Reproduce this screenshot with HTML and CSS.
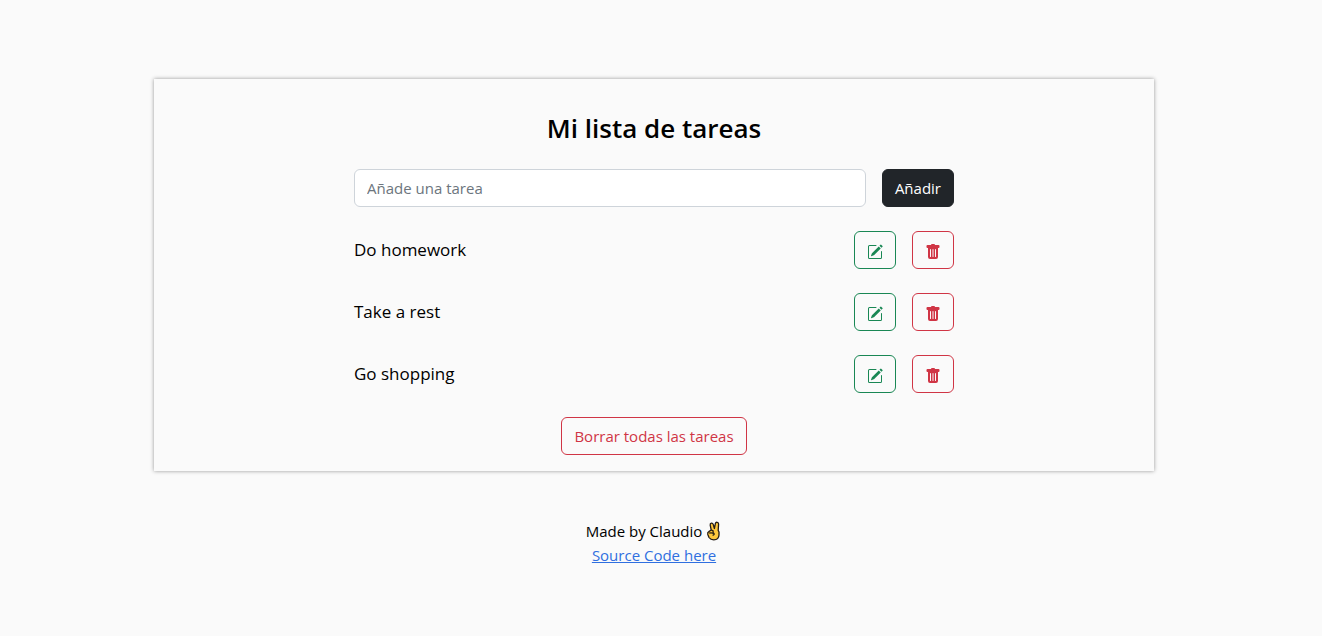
FILE: index.html
```
<!DOCTYPE html>
<html lang="es">
<head>
<meta charset="utf-8">
<meta name="viewport" content="width=device-width, initial-scale=1">
<title>Mi lista de tareas</title>
<link rel="stylesheet" href="styles.css">
</head>
<body>
<svg class="sprite" aria-hidden="true">
  <symbol id="pencil" viewBox="0 0 16 16">
    <path d="M15.502 1.94a.5.5 0 0 1 0 .706L14.459 3.69l-2-2L13.502.646a.5.5 0 0 1 .707 0l1.293 1.293zm-1.75 2.456-2-2L4.939 9.21a.5.5 0 0 0-.121.196l-.805 2.414a.25.25 0 0 0 .316.316l2.414-.805a.5.5 0 0 0 .196-.12l6.813-6.814z"/>
    <path fill-rule="evenodd" d="M1 13.5A1.5 1.5 0 0 0 2.5 15h11a1.5 1.5 0 0 0 1.5-1.5v-6a.5.5 0 0 0-1 0v6a.5.5 0 0 1-.5.5h-11a.5.5 0 0 1-.5-.5v-11a.5.5 0 0 1 .5-.5H9a.5.5 0 0 0 0-1H2.5A1.5 1.5 0 0 0 1 2.5v11z"/>
  </symbol>
  <symbol id="trash" viewBox="0 0 16 16">
    <path d="M2.5 1a1 1 0 0 0-1 1v1a1 1 0 0 0 1 1H3v9a2 2 0 0 0 2 2h6a2 2 0 0 0 2-2V4h.5a1 1 0 0 0 1-1V2a1 1 0 0 0-1-1H10a1 1 0 0 0-1-1H7a1 1 0 0 0-1 1H2.5zm3 4a.5.5 0 0 1 .5.5v7a.5.5 0 0 1-1 0v-7a.5.5 0 0 1 .5-.5zM8 5a.5.5 0 0 1 .5.5v7a.5.5 0 0 1-1 0v-7A.5.5 0 0 1 8 5zm3 .5v7a.5.5 0 0 1-1 0v-7a.5.5 0 0 1 1 0z"/>
  </symbol>
</svg>
<main class="card">
  <h1 class="title">Mi lista de tareas</h1>
  <form class="row">
    <input class="field" type="text" placeholder="Añade una tarea" aria-label="Añade una tarea">
    <button class="btn btn-dark" type="submit">Añadir</button>
  </form>
  <ul class="tasks">
    <li class="row">
      <span class="task">Do homework</span>
      <button class="btn btn-edit" type="button" aria-label="Editar"><svg class="icon"><use href="#pencil"/></svg></button>
      <button class="btn btn-delete" type="button" aria-label="Borrar"><svg class="icon"><use href="#trash"/></svg></button>
    </li>
    <li class="row">
      <span class="task">Take a rest</span>
      <button class="btn btn-edit" type="button" aria-label="Editar"><svg class="icon"><use href="#pencil"/></svg></button>
      <button class="btn btn-delete" type="button" aria-label="Borrar"><svg class="icon"><use href="#trash"/></svg></button>
    </li>
    <li class="row">
      <span class="task">Go shopping</span>
      <button class="btn btn-edit" type="button" aria-label="Editar"><svg class="icon"><use href="#pencil"/></svg></button>
      <button class="btn btn-delete" type="button" aria-label="Borrar"><svg class="icon"><use href="#trash"/></svg></button>
    </li>
  </ul>
  <button class="btn btn-delete" type="button">Borrar todas las tareas</button>
</main>
<footer class="footer">
  <p class="credit">Made by Claudio
    <svg class="hand" viewBox="0 0 16 20" aria-hidden="true">
      <path d="M5.2 9 4.2 4.2Q4 2.4 5.4 2.2T7.2 3.4L8.4 7.5 9.4 2.4Q9.8 1 11.2 1.3T12.6 3L12.2 9.5 13 11V14Q12.8 18.8 7.8 18.8 4.6 18.8 3 16.5L1.8 13.5Q1.2 11.5 2.8 10.6Z"/>
      <path d="M5.2 9.2 7 9.6 7.2 11.8M3.2 12.2Q5 11.4 8 12.4 8.6 14 6.6 14.4"/>
    </svg>
  </p>
  <a class="source" href="#">Source Code here</a>
</footer>
</body>
</html>
```
FILE: styles.css
```
* { box-sizing: border-box; }

body {
  margin: 0;
  padding: 79px 168px 64px 154px;
  background: #fafafa;
  color: #000;
  font: 15px/24px "Segoe UI", "Open Sans", "Noto Sans", sans-serif;
}

.sprite { position: absolute; width: 0; height: 0; }

.card {
  display: flex;
  flex-direction: column;
  align-items: center;
  gap: 24px;
  padding: 32px 16px 16px;
  box-shadow: 0 0 4px rgba(0, 0, 0, 0.4);
}

.title {
  margin: 0;
  font-size: 26px;
  line-height: 34px;
  font-weight: 600;
}

.row {
  display: flex;
  gap: 16px;
  width: 100%;
  max-width: 600px;
}

.field {
  flex: 1;
  min-width: 0;
  height: 38px;
  padding: 6px 12px;
  border: 1px solid #ced4da;
  border-radius: 6px;
  background: #fff;
  color: #212529;
  font: inherit;
}

.field::placeholder { color: #6c757d; opacity: 1; }

.btn {
  min-height: 38px;
  padding: 6px 12px;
  border: 1px solid;
  border-radius: 6px;
  background: transparent;
  font: inherit;
  cursor: pointer;
}

.btn-dark { border-color: #212529; background: #212529; color: #fff; }
.btn-edit { color: #198754; }
.btn-delete { color: #d03545; }

.tasks {
  display: flex;
  flex-direction: column;
  align-items: center;
  gap: 24px;
  width: 100%;
  margin: 0;
  padding: 0;
  list-style: none;
}

.task { flex: 1; font-size: 17px; line-height: 38px; }

.icon {
  display: block;
  width: 16px;
  height: 16px;
  margin-top: 4px;
  fill: currentColor;
}

.footer { padding-top: 48px; text-align: center; }

.credit {
  display: flex;
  justify-content: center;
  align-items: center;
  gap: 4px;
  margin: 0;
}

.hand {
  width: 16px;
  height: 20px;
  fill: #ffc83d;
  stroke: #241c15;
  stroke-width: 1.3;
  stroke-linejoin: round;
}

.hand path + path { fill: none; }

.source { color: #2f6fe0; }
```
